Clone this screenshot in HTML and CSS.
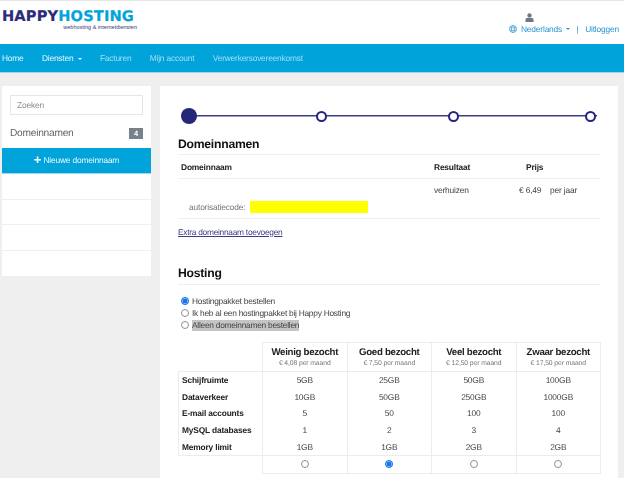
FILE: index.html
```html
<!DOCTYPE html>
<html lang="nl">
<head>
<meta charset="utf-8">
<title>Happy Hosting</title>
<link rel="stylesheet" href="styles.css">
</head>
<body>
<div class="page">
  <header class="top">
    <div class="logo">
      <div class="logo-name"><span class="logo-a">HAPPY</span><span class="logo-b">HOSTING</span></div>
      <div class="logo-sub">webhosting &amp; internetdiensten</div>
    </div>
    <div class="account">
      <svg class="user-icon" viewBox="0 0 10 10" width="9" height="9"><circle cx="5" cy="2.7" r="2.4"/><path d="M0.5 10V7.6C0.5 6.3 2 5.6 3.2 5.4H6.8C8 5.6 9.5 6.3 9.5 7.6V10Z"/></svg>
      <div class="account-row">
        <svg class="globe" viewBox="0 0 10 10" width="8" height="8"><circle cx="5" cy="5" r="4.4"/><ellipse cx="5" cy="5" rx="2" ry="4.4"/><path d="M0.6 3.4H9.4M0.6 6.6H9.4"/></svg>
        <span class="lang">Nederlands</span>
        <span class="caret caret-blue"></span>
        <span class="sep">|</span>
        <span>Uitloggen</span>
      </div>
    </div>
  </header>

  <nav class="nav">
    <a class="nav-on">Home</a>
    <a class="nav-on">Diensten <span class="caret caret-white"></span></a>
    <a>Facturen</a>
    <a>Mijn account</a>
    <a>Verwerkersovereenkomst</a>
  </nav>

  <div class="content">
    <aside class="side">
      <div class="search">Zoeken</div>
      <div class="side-title"><span>Domeinnamen</span><span class="badge">4</span></div>
      <div class="new-btn"><span class="plus">+</span> Nieuwe domeinnaam</div>
      <div class="side-row"></div>
      <div class="side-row"></div>
      <div class="side-row"></div>
      <div class="side-row"></div>
    </aside>

    <main class="main">
      <div class="steps">
        <span class="step step-first"></span>
        <span class="step step-two"></span>
        <span class="step step-three"></span>
        <span class="step step-four"></span>
      </div>

      <h2 class="title">Domeinnamen</h2>
      <div class="dom-row dom-head">
        <span class="dom-name">Domeinnaam</span>
        <span class="dom-res">Resultaat</span>
        <span class="dom-price">Prijs</span>
      </div>
      <div class="dom-body">
        <div class="dom-row dom-values">
          <span class="dom-name"></span>
          <span class="dom-res">verhuizen</span>
          <span class="dom-price">€ 6,49</span>
          <span class="dom-per">per jaar</span>
        </div>
        <div class="auth">
          <span class="auth-label">autorisatiecode:</span>
          <span class="auth-mark"></span>
        </div>
      </div>
      <a class="extra">Extra domeinnaam toevoegen</a>

      <h2 class="title title-hosting">Hosting</h2>
      <div class="radios">
        <label class="radio-row"><span class="radio radio-on"></span>Hostingpakket bestellen</label>
        <label class="radio-row"><span class="radio"></span>Ik heb al een hostingpakket bij Happy Hosting</label>
        <label class="radio-row"><span class="radio"></span><span class="selected">Alleen domeinnamen bestellen</span></label>
      </div>

      <table class="plans">
        <thead>
          <tr>
            <th class="blank"></th>
            <th><b>Weinig bezocht</b><small>€ 4,08 per maand</small></th>
            <th><b>Goed bezocht</b><small>€ 7,50 per maand</small></th>
            <th><b>Veel bezocht</b><small>€ 12,50 per maand</small></th>
            <th><b>Zwaar bezocht</b><small>€ 17,50 per maand</small></th>
          </tr>
        </thead>
        <tbody>
          <tr><th>Schijfruimte</th><td>5GB</td><td>25GB</td><td>50GB</td><td>100GB</td></tr>
          <tr><th>Dataverkeer</th><td>10GB</td><td>50GB</td><td>250GB</td><td>1000GB</td></tr>
          <tr><th>E-mail accounts</th><td>5</td><td>50</td><td>100</td><td>100</td></tr>
          <tr><th>MySQL databases</th><td>1</td><td>2</td><td>3</td><td>4</td></tr>
          <tr class="last"><th>Memory limit</th><td>1GB</td><td>1GB</td><td>2GB</td><td>2GB</td></tr>
          <tr class="pick">
            <th class="blank"></th>
            <td><span class="radio"></span></td>
            <td><span class="radio radio-on"></span></td>
            <td><span class="radio"></span></td>
            <td><span class="radio"></span></td>
          </tr>
        </tbody>
      </table>
    </main>
  </div>
</div>
</body>
</html>
```

FILE: styles.css
```css
* { box-sizing: border-box; }
html, body { margin: 0; padding: 0; }
body {
  width: 624px;
  height: 478px;
  overflow: hidden;
  background: #efefef;
  font-family: "Liberation Sans", Arial, sans-serif;
  font-size: 8.4px;
  letter-spacing: -0.17px;
  color: #444;
  text-rendering: geometricPrecision;
}
.page { filter: blur(0.3px); height: 478px; overflow: hidden; }

.top {
  height: 44px;
  background: #fff;
  border-top: 1px solid #e6e6e6;
  display: flex;
  justify-content: space-between;
  padding: 10px 5px 0 2px;
}
.logo-name {
  font-family: "DejaVu Sans", sans-serif;
  font-weight: 700;
  font-size: 14.6px;
  line-height: 12px;
  letter-spacing: 0.15px;
  -webkit-text-stroke: 0.2px currentColor;
  width: 136px;
  white-space: nowrap;
}
.logo-a { color: #2b2a78; }
.logo-b { color: #00a4db; }
.logo-sub {
  margin-top: 2px;
  text-align: right;
  padding-right: 1px;
  width: 136px;
  font-size: 5.5px;
  line-height: 6px;
  letter-spacing: 0;
  color: #3a3a80;
}
.account {
  display: flex;
  flex-direction: column;
  align-items: flex-start;
  color: #2b96d2;
  padding-top: 2px;
}
.user-icon { fill: #6d7880; display: block; margin: 0 0 2px 16px; }
.account-row { display: flex; align-items: center; line-height: 10px; white-space: nowrap; }
.globe { fill: none; stroke: #2b96d2; stroke-width: 0.8; margin-right: 4px; }
.caret {
  display: inline-block;
  width: 0;
  height: 0;
  border-left: 2.5px solid transparent;
  border-right: 2.5px solid transparent;
  border-top: 2.5px solid;
  vertical-align: 1px;
}
.caret-blue { color: #2b96d2; margin-left: 4px; }
.caret-white { color: #fff; margin-left: 2px; }
.sep { margin: 0 7px 0 6px; }

.nav {
  height: 29px;
  background: #00a4db;
  border-bottom: 1px solid #9bd9ef;
  display: flex;
  align-items: center;
  padding: 0 0 0 2px;
  color: #a3def2;
  letter-spacing: -0.2px;
  gap: 18.4px;
}
.nav-on { color: #e6f6fb; }

.content {
  display: flex;
  align-items: flex-start;
  padding: 13px 6px 0 2px;
  gap: 9px;
}
.side {
  width: 149px;
  background: #fff;
  display: flex;
  flex-direction: column;
}
.search {
  margin: 9px 8px 0;
  height: 20px;
  border: 1px solid #e6e6e6;
  padding-left: 6px;
  line-height: 18px;
  color: #8a8a8a;
}
.side-title {
  display: flex;
  justify-content: space-between;
  align-items: center;
  margin: 12px 8px 0;
  height: 12px;
  font-size: 10.2px;
  letter-spacing: -0.25px;
  color: #666;
}
.badge {
  width: 14px;
  height: 11px;
  background: #77818a;
  color: #fff;
  font-size: 7.5px;
  font-weight: 700;
  line-height: 11px;
  text-align: center;
}
.new-btn {
  margin-top: 9px;
  height: 26px;
  background: #00a4db;
  border-bottom: 1px solid #9bd9ef;
  color: #eaf8fd;
  font-size: 8.4px;
  line-height: 25px;
  text-align: center;
}
.plus { font-size: 13px; font-weight: 700; color: #fff; vertical-align: -1px; line-height: 10px; }
.side-row { height: 25.5px; border-bottom: 1.5px solid #efefef; }
.side-row:last-child { border-bottom: 0; }

.main {
  width: 458px;
  height: 405px;
  background: #fff;
  padding: 22px 18px 0 18px;
}
.steps {
  display: flex;
  align-items: center;
  height: 16px;
  margin: 0 3px 0 3px;
  background: linear-gradient(#3c3c86, #3c3c86) center / 100% 1.5px no-repeat;
}
.step {
  width: 11px;
  height: 11px;
  border: 2px solid #25257a;
  border-radius: 50%;
  background: #fff;
}
.step-first { width: 16px; height: 16px; background: #25257a; border: 0; }
.step-two { margin-left: 118.5px; }
.step-three { margin-left: 121px; }
.step-four { margin-left: 126px; }

.title {
  margin: 0;
  font-size: 12.2px;
  letter-spacing: -0.25px;
  line-height: 14px;
  font-weight: 700;
  color: #111;
}
.steps + .title { margin-top: 13px; }
.dom-row { display: flex; align-items: center; }
.dom-head {
  margin-top: 3px;
  height: 25px;
  border-top: 1px solid #efefef;
  border-bottom: 1px solid #efefef;
  font-weight: 700;
  color: #222;
}
.dom-name { width: 256px; padding-left: 3px; }
.dom-res { width: 92px; }
.dom-price { width: 31px; }
.dom-values { height: 22px; padding-bottom: 1px; }
.dom-values .dom-price { margin-left: -7px; }
.dom-body { height: 40px; border-bottom: 1px solid #efefef; }
.auth { display: flex; align-items: center; padding-left: 11px; height: 12px; }
.auth-label { color: #777; width: 61px; }
.auth-mark { width: 118px; height: 12px; background: #ffff00; border-radius: 1px; }
.extra {
  display: block;
  margin-top: 8px;
  line-height: 10px;
  letter-spacing: -0.28px;
  color: #3b3b85;
  text-decoration: underline;
}
.title-hosting { margin-top: 29px; padding-bottom: 4px; border-bottom: 1px solid #efefef; }
.radios { margin-top: 10px; margin-left: 3px; }
.radio-row { display: flex; align-items: center; height: 12px; color: #444; gap: 3px; letter-spacing: -0.26px; }
.radio {
  display: inline-block;
  width: 8px;
  height: 8px;
  border: 1px solid #8f8f8f;
  border-radius: 50%;
  background: #fff;
  flex: none;
}
.radio-on { border: 1.5px solid #1a73e8; background: #1a73e8; box-shadow: inset 0 0 0 0.5px #fff; }
.selected { background: #c4c4c4; padding-bottom: 1px; }

.plans {
  margin-top: 11px;
  width: 423px;
  border-collapse: collapse;
  table-layout: fixed;
}
.plans th, .plans td {
  padding: 0;
  text-align: center;
  font-weight: 400;
  vertical-align: middle;
}
.plans th:first-child { width: 84px; }
.plans thead th {
  height: 29px;
  border: 1px solid #ececec;
}
.plans thead th.blank { border: 0; border-right: 1px solid #ececec; border-bottom: 1px solid #ececec; }
.plans b { display: block; font-size: 9.7px; letter-spacing: -0.3px; line-height: 12px; color: #222; }
.plans small { display: block; font-size: 6.8px; letter-spacing: -0.1px; line-height: 9px; color: #777; }
.plans tbody tr { height: 16.8px; }
.plans tbody th {
  font-weight: 700;
  text-align: left;
  padding-left: 3px;
  color: #222;
  border-left: 1px solid #ececec;
}
.plans tbody td {
  border-left: 1px solid #ececec;
  border-right: 1px solid #ececec;
  color: #444;
}
.plans .last th, .plans .last td { border-bottom: 1px solid #ececec; }
.plans .pick { height: 18px; }
.plans .pick th { border: 0; }
.plans .pick td { border-bottom: 1px solid #ececec; }
.plans .pick .radio { display: block; margin: 0 auto; }
```
